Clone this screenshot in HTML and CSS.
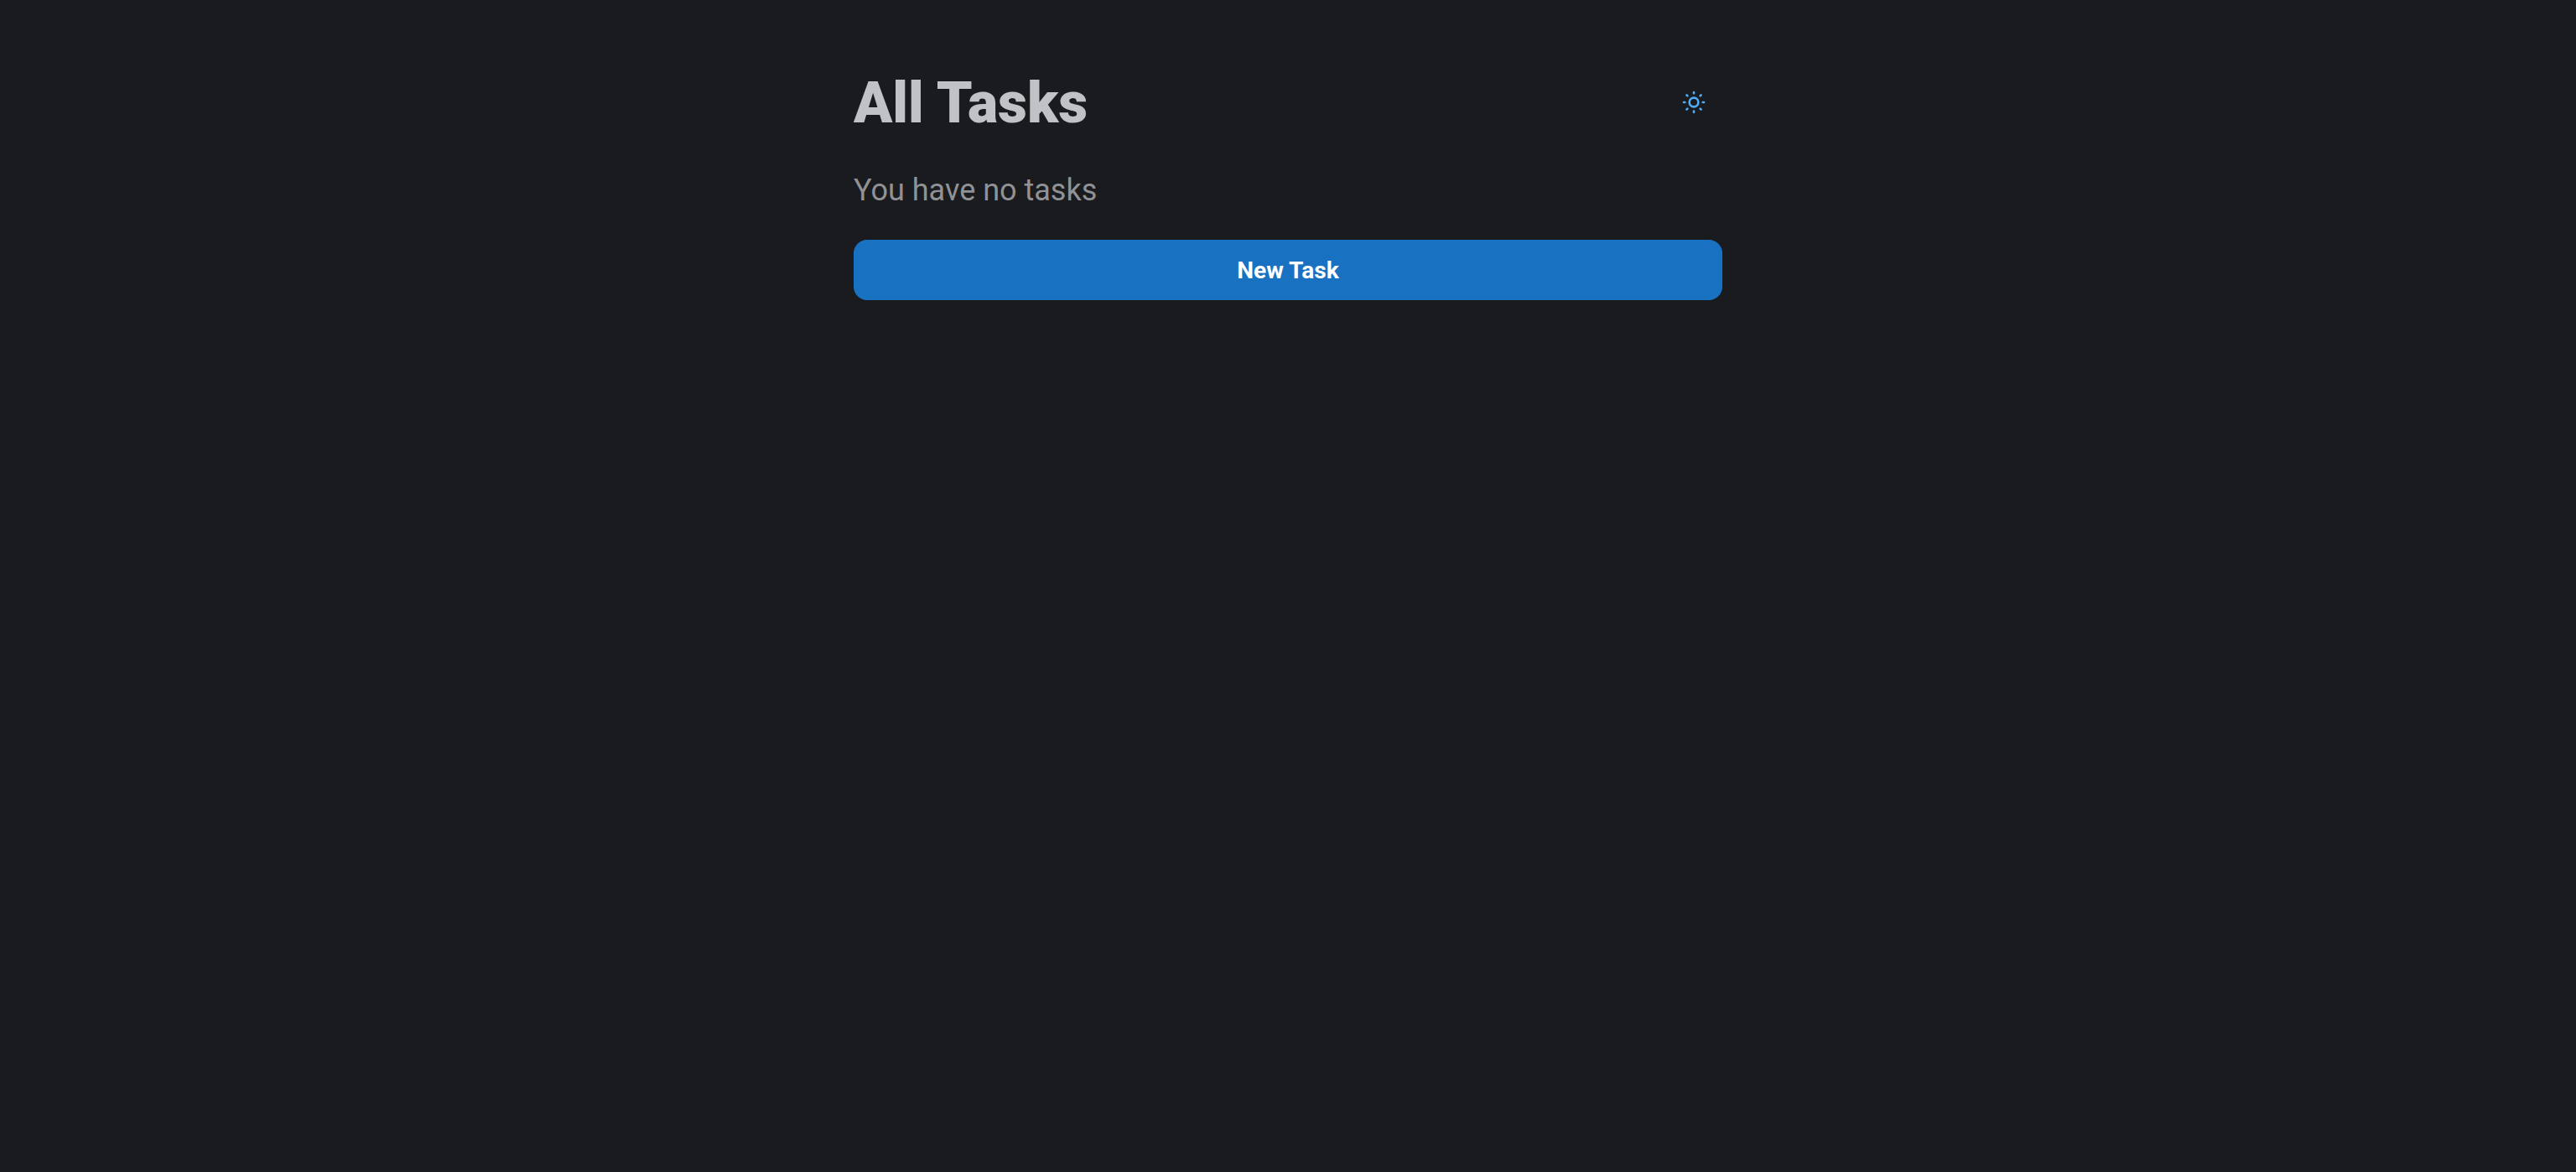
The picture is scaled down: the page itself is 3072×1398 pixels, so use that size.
FILE: index.html
```
<!DOCTYPE html>
<html lang="en">
<head>
<meta charset="utf-8">
<title>All Tasks</title>
<link rel="stylesheet" href="styles.css">
</head>
<body>
<main class="container">
  <header class="header">
    <h1 class="title">All Tasks</h1>
    <button class="theme-toggle" type="button" aria-label="Toggle color scheme">
      <svg class="icon" viewBox="0 0 24 24" aria-hidden="true">
        <circle cx="12" cy="12" r="4"/>
        <path d="M3 12h1m8-9v1m8 8h1m-9 8v1M5.6 5.6l.7.7m12.1-.7l-.7.7m0 11.4l.7.7m-12.1-.7l-.7.7"/>
      </svg>
    </button>
  </header>
  <p class="empty">You have no tasks</p>
  <button class="new-task" type="button">New Task</button>
</main>
</body>
</html>
```
FILE: styles.css
```
* {
  box-sizing: border-box;
}

body {
  margin: 0;
  background: #1a1b1e;
  color: #c1c2c5;
  font-family: Roboto, "Liberation Sans", sans-serif;
}

.container {
  max-width: 1100px;
  margin: 0 auto;
  padding: 78px 32px 32px;
}

.header {
  display: flex;
  align-items: flex-start;
  justify-content: space-between;
}

.title {
  margin: 0;
  font-size: 68px;
  font-weight: 900;
  line-height: 90px;
}

.theme-toggle {
  display: flex;
  align-items: center;
  justify-content: center;
  width: 68px;
  height: 88px;
  padding: 0;
  border: 0;
  border-radius: 8px;
  background: transparent;
  color: #4dabf7;
  cursor: pointer;
}

.icon {
  width: 32px;
  height: 32px;
  fill: none;
  stroke: currentColor;
  stroke-width: 2;
  stroke-linecap: round;
  stroke-linejoin: round;
}

.empty {
  margin: 31px 0;
  color: #909296;
  font-size: 36px;
  line-height: 56px;
}

.new-task {
  display: block;
  width: 100%;
  height: 72px;
  padding: 2px 36px 0;
  border: 0;
  border-radius: 16px;
  background: #1971c2;
  color: #fff;
  font: 700 28px/70px Roboto, "Liberation Sans", sans-serif;
  cursor: pointer;
}
```
